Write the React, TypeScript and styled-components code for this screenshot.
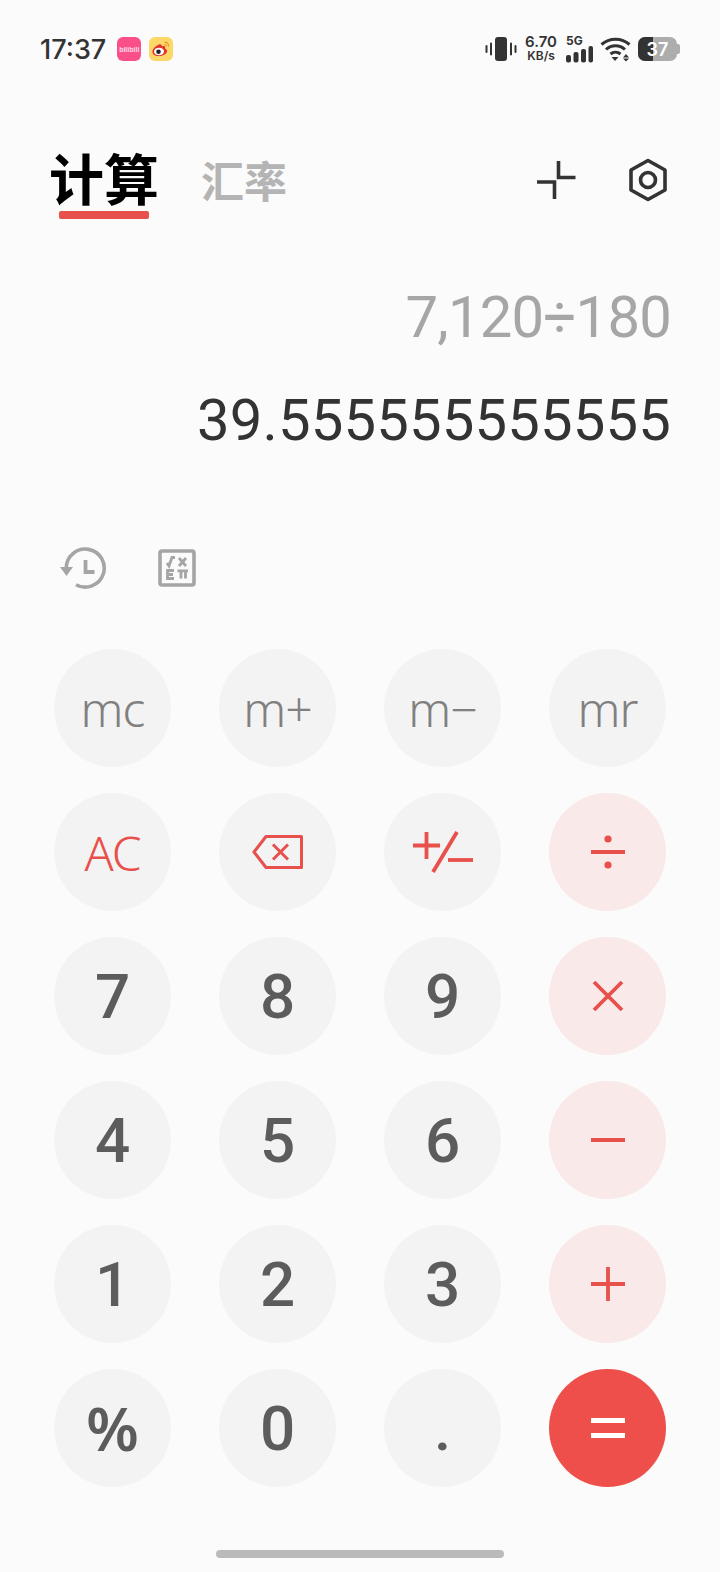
import React from 'react'
import styled, { createGlobalStyle } from 'styled-components'

const GlobalStyle = createGlobalStyle`
  html, body {
    margin: 0;
    padding: 0;
    background: #fbfbfb;
  }
  * {
    box-sizing: border-box;
  }
`

const red = '#e8504c'

function VibrateIcon () {
  return (
    <svg width="32" height="26" viewBox="0 0 32 26">
      <rect x="10" y="1" width="12" height="24" rx="3" fill="#333" />
      <path d="M6 7.500v11M1.500 10v6M26 7.500v11M30.500 10v6" stroke="#333" strokeWidth="2" strokeLinecap="round" />
    </svg>
  )
}

function SignalIcon () {
  return (
    <svg width="28" height="17" viewBox="0 0 28 17">
      <rect x="0" y="9" width="5" height="7.500" rx="2" fill="#333" />
      <rect x="7.500" y="6" width="5" height="10.500" rx="2" fill="#333" />
      <rect x="15" y="3" width="5" height="13.500" rx="2" fill="#333" />
      <rect x="22.500" y="0" width="4.500" height="16.500" rx="2" fill="#333" />
    </svg>
  )
}

function WifiIcon () {
  return (
    <svg width="32" height="26" viewBox="0 0 32 26" fill="none">
      <path d="M1.500 8.500C9.500 1.500 21.500 1.500 29.500 8.500" stroke="#333" strokeWidth="3" />
      <path d="M6 13.500C11.500 8.500 19.500 8.500 25 13.500" stroke="#333" strokeWidth="3" />
      <path d="M10.500 18C13.500 15.500 17.500 15.500 20.500 18" stroke="#333" strokeWidth="3" />
      <path d="M11.500 21h7l-3.500 4zM23 21.500l3-3.500 3 3.500zM23 22.500h6l-3 3z" fill="#333" />
    </svg>
  )
}

function WeiboIcon () {
  return (
    <svg width="24" height="24" viewBox="0 0 24 24">
      <rect width="24" height="24" rx="6" fill="#fdd868" />
      <path d="M10 7.500C6 9 3 12.500 3.500 15.500C4.200 18.500 8 19.500 11.500 19C15.500 18.300 18.500 16 18 13.500C17.700 12 16 11.700 16 11.200C16.500 9.500 15.500 8.500 13 9.500C12.800 7.500 11.500 7 10 7.500Z" fill="#e5312b" />
      <ellipse cx="10" cy="14.500" rx="5" ry="3.800" fill="#fff" />
      <circle cx="9.500" cy="14.700" r="2.300" fill="#222" />
      <path d="M15.500 5.500C18 5 20 7 19.500 9.500M15.500 7.800C16.800 7.500 17.600 8.300 17.300 9.500" stroke="#e8902b" strokeWidth="1.100" fill="none" />
    </svg>
  )
}

function ShrinkIcon () {
  return (
    <svg width="40" height="40" viewBox="0 0 40 40" fill="none" stroke="#333" strokeWidth="3.600">
      <path d="M22.500 1v16.500H39.500" />
      <path d="M1 22h17.500v17" />
    </svg>
  )
}

function SettingsIcon () {
  return (
    <svg width="40" height="44" viewBox="0 0 40 44" fill="none" stroke="#333" strokeWidth="3.600">
      <path d="M20 2.500L37 12v20L20 41.500L3 32V12z" strokeLinejoin="round" />
      <circle cx="20" cy="22" r="7.500" />
    </svg>
  )
}

function HistoryIcon () {
  return (
    <svg width="48" height="44" viewBox="0 0 48 44" fill="none">
      <path d="M6.200 22A19 19 0 1 1 16 38.700" stroke="#a5a5a5" strokeWidth="3.600" />
      <path d="M0 21h13l-6.500 9z" fill="#a5a5a5" />
      <path d="M25.500 14v12h9" stroke="#a5a5a5" strokeWidth="3.800" />
    </svg>
  )
}

function FormulaIcon () {
  return (
    <svg width="38" height="38" viewBox="0 0 38 38" fill="none">
      <rect x="2" y="2" width="34" height="34" rx="2" stroke="#a5a5a5" strokeWidth="3.600" />
      <path d="M9 14l2 3 3-8.500h3M21 9l7 8M28 9l-7 8" stroke="#a5a5a5" strokeWidth="2.800" />
      <path d="M16 21.500H9.500v8H16M9.500 25.500H15M19.500 21.800H30M23 22v7.500M27.500 22v7.500" stroke="#a5a5a5" strokeWidth="2.800" />
    </svg>
  )
}

function BackspaceIcon () {
  return (
    <svg width="52" height="36" viewBox="0 0 52 36" fill="none" stroke={red} strokeWidth="3">
      <path d="M14 2.500H49.500V33.500H14L2 18z" strokeLinejoin="round" />
      <path d="M21 10.500l15 15M36 10.500l-15 15" />
    </svg>
  )
}

function PlusMinusIcon () {
  return (
    <svg width="62" height="42" viewBox="0 0 62 42" fill="none" stroke={red} strokeWidth="3.800">
      <path d="M1 14.500h27M14.500 1v27" />
      <path d="M45 1L21 41" />
      <path d="M36 29h25" />
    </svg>
  )
}

function DivideIcon () {
  return (
    <svg width="36" height="38" viewBox="0 0 36 38">
      <rect x="1" y="17" width="34" height="4" fill={red} />
      <circle cx="18" cy="6" r="3.600" fill={red} />
      <circle cx="18" cy="32" r="3.600" fill={red} />
    </svg>
  )
}

function TimesIcon () {
  return (
    <svg width="32" height="32" viewBox="0 0 32 32" stroke={red} strokeWidth="3.800">
      <path d="M2 2l28 28M30 2L2 30" />
    </svg>
  )
}

function MinusIcon () {
  return (
    <svg width="34" height="4" viewBox="0 0 34 4">
      <rect width="34" height="4" fill={red} />
    </svg>
  )
}

function PlusIcon () {
  return (
    <svg width="36" height="36" viewBox="0 0 36 36" stroke={red} strokeWidth="3.800">
      <path d="M1 18h34M18 1v34" />
    </svg>
  )
}

function EqualsIcon () {
  return (
    <svg width="34" height="24" viewBox="0 0 34 24" fill="#fff">
      <rect y="2" width="34" height="5" />
      <rect y="17" width="34" height="5" />
    </svg>
  )
}

export default function App () {
  return (
    <Screen>
      <GlobalStyle />
      <StatusBar>
        <StatusLeft>
          <Clock>17:37</Clock>
          <BiliTile>bilibili</BiliTile>
          <WeiboIcon />
        </StatusLeft>
        <StatusRight>
          <VibrateIcon />
          <Speed>
            <b>6.70</b>
            <span>KB/s</span>
          </Speed>
          <Network>
            <small>5G</small>
            <SignalIcon />
          </Network>
          <WifiIcon />
          <Battery>
            <BatteryBody>
              <BatteryFill />
              <BatteryLabel>37</BatteryLabel>
            </BatteryBody>
          </Battery>
        </StatusRight>
      </StatusBar>

      <Header>
        <TabActive>计算</TabActive>
        <Tab>汇率</Tab>
        <HeaderIcons>
          <ShrinkIcon />
          <SettingsIcon />
        </HeaderIcons>
      </Header>

      <Display>
        <Expression>7,120÷180</Expression>
        <Result>39.555555555555</Result>
      </Display>

      <Tools>
        <HistoryIcon />
        <FormulaIcon />
      </Tools>

      <Keypad>
        <Key $tone="memory">mc</Key>
        <Key $tone="memory">m+</Key>
        <Key $tone="memory">m−</Key>
        <Key $tone="memory">mr</Key>
        <Key $tone="action">AC</Key>
        <Key><BackspaceIcon /></Key>
        <Key><PlusMinusIcon /></Key>
        <Key $tone="operator"><DivideIcon /></Key>
        <Key>7</Key>
        <Key>8</Key>
        <Key>9</Key>
        <Key $tone="operator"><TimesIcon /></Key>
        <Key>4</Key>
        <Key>5</Key>
        <Key>6</Key>
        <Key $tone="operator"><MinusIcon /></Key>
        <Key>1</Key>
        <Key>2</Key>
        <Key>3</Key>
        <Key $tone="operator"><PlusIcon /></Key>
        <Key $tone="percent">%</Key>
        <Key>0</Key>
        <Key>.</Key>
        <Key $tone="equals"><EqualsIcon /></Key>
      </Keypad>

      <HomeBar />
    </Screen>
  )
}

const Screen = styled.div`
  display: flex;
  flex-direction: column;
  width: 720px;
  height: 1572px;
  overflow: hidden;
  background: #fbfbfb;
  font-family: "Noto Sans", "Noto Sans CJK SC", sans-serif;
`

const StatusBar = styled.div`
  display: flex;
  align-items: center;
  justify-content: space-between;
  height: 50px;
  margin-top: 24px;
  padding: 0 40px;
`

const StatusLeft = styled.div`
  display: flex;
  align-items: center;
  gap: 8px;
`

const Clock = styled.span`
  margin-right: 3px;
  font-family: "Inter", sans-serif;
  font-size: 27px;
  font-weight: 500;
  color: #333;
`

const BiliTile = styled.span`
  display: flex;
  align-items: center;
  justify-content: center;
  width: 24px;
  height: 24px;
  border-radius: 6px;
  background: #fb4f8a;
  font-family: "Liberation Sans", sans-serif;
  font-size: 7px;
  font-weight: 700;
  color: #ffdce8;
`

const StatusRight = styled.div`
  display: flex;
  align-items: center;
  gap: 6px;
`

const Speed = styled.div`
  display: flex;
  flex-direction: column;
  align-items: center;
  margin-left: 2px;
  font-family: "Inter", sans-serif;
  color: #333;
  line-height: 14px;
  & b {
    font-size: 15px;
    font-weight: 600;
  }
  & span {
    font-size: 12px;
    font-weight: 600;
  }
`

const Network = styled.div`
  display: flex;
  flex-direction: column;
  width: 28px;
  margin-left: 3px;
  & small {
    font-family: "Inter", sans-serif;
    font-size: 12px;
    font-weight: 700;
    line-height: 10px;
    color: #333;
  }
`

const Battery = styled.div`
  position: relative;
  margin-right: 3px;
  &::after {
    content: '';
    position: absolute;
    top: 7px;
    right: -3px;
    width: 3px;
    height: 10px;
    border-radius: 0 2px 2px 0;
    background: #adadad;
  }
`

const BatteryBody = styled.div`
  position: relative;
  width: 39px;
  height: 24px;
  border-radius: 7px;
  overflow: hidden;
  background: #adadad;
`

const BatteryFill = styled.div`
  width: 15px;
  height: 100%;
  background: #333;
`

const BatteryLabel = styled.span`
  position: absolute;
  inset: 0;
  display: flex;
  align-items: center;
  justify-content: center;
  font-family: "Inter", sans-serif;
  font-size: 18px;
  font-weight: 600;
  color: #fff;
`

const Header = styled.div`
  display: flex;
  align-items: center;
  height: 84px;
  margin-top: 63px;
  padding: 0 52px 0 50px;
`

const TabActive = styled.div`
  position: relative;
  margin: -6px 0 0 -1px;
  font-size: 55px;
  font-weight: 700;
  font-family: "Noto Sans CJK SC", sans-serif;
  line-height: 60px;
  color: #000;
  &::after {
    content: '';
    position: absolute;
    left: 10px;
    bottom: -13px;
    width: 90px;
    height: 8px;
    border-radius: 2px;
    background: ${red};
  }
`

const Tab = styled.div`
  margin-left: 42px;
  font-size: 43px;
  font-weight: 700;
  font-family: "Noto Sans CJK SC", sans-serif;
  color: #b4b4b4;
`

const HeaderIcons = styled.div`
  display: flex;
  align-items: center;
  gap: 52px;
  margin: 2px 0 0 auto;
`

const Display = styled.div`
  display: flex;
  flex-direction: column;
  align-items: flex-end;
  margin-top: 58px;
  padding-right: 49px;
  font-family: "Roboto", sans-serif;
`

const Expression = styled.div`
  font-size: 58px;
  font-weight: 450;
  line-height: 76px;
  letter-spacing: -0.8px;
  color: #a6a6a6;
`

const Result = styled.div`
  margin-top: 27px;
  font-size: 58px;
  font-weight: 450;
  line-height: 76px;
  letter-spacing: 0.15px;
  color: #333;
`

const Tools = styled.div`
  display: flex;
  align-items: center;
  gap: 50px;
  height: 50px;
  margin-top: 85px;
  padding-left: 60px;
`

const Keypad = styled.div`
  display: grid;
  grid-template-columns: repeat(4, 117px);
  grid-auto-rows: 118px;
  column-gap: 48px;
  row-gap: 26px;
  margin-top: 56px;
  padding-left: 54px;
`

const toneStyles: Record<string, string> = {
  digit: 'background: #f3f3f3; color: #5c5c5c; font-family: "Roboto", sans-serif; font-size: 62px; font-weight: 460;',
  percent: 'background: #f3f3f3; color: #5c5c5c; font-size: 60px; font-weight: 600;',
  memory: 'background: #f3f3f3; color: #808080; font-size: 48px; font-weight: 350; letter-spacing: -1px;',
  action: 'background: #f3f3f3; color: #e8504c; font-size: 48px; font-weight: 350; letter-spacing: -1px;',
  operator: 'background: #f9e9e8;',
  equals: 'background: #ee4f4a;',
}

const Key = styled.div<{ $tone?: string }>`
  display: flex;
  align-items: center;
  justify-content: center;
  border-radius: 50%;
  ${({ $tone }) => toneStyles[$tone ?? 'digit']}
`

const HomeBar = styled.div`
  align-self: center;
  width: 288px;
  height: 8px;
  margin-top: 63px;
  border-radius: 4px;
  background: #bababa;
`
